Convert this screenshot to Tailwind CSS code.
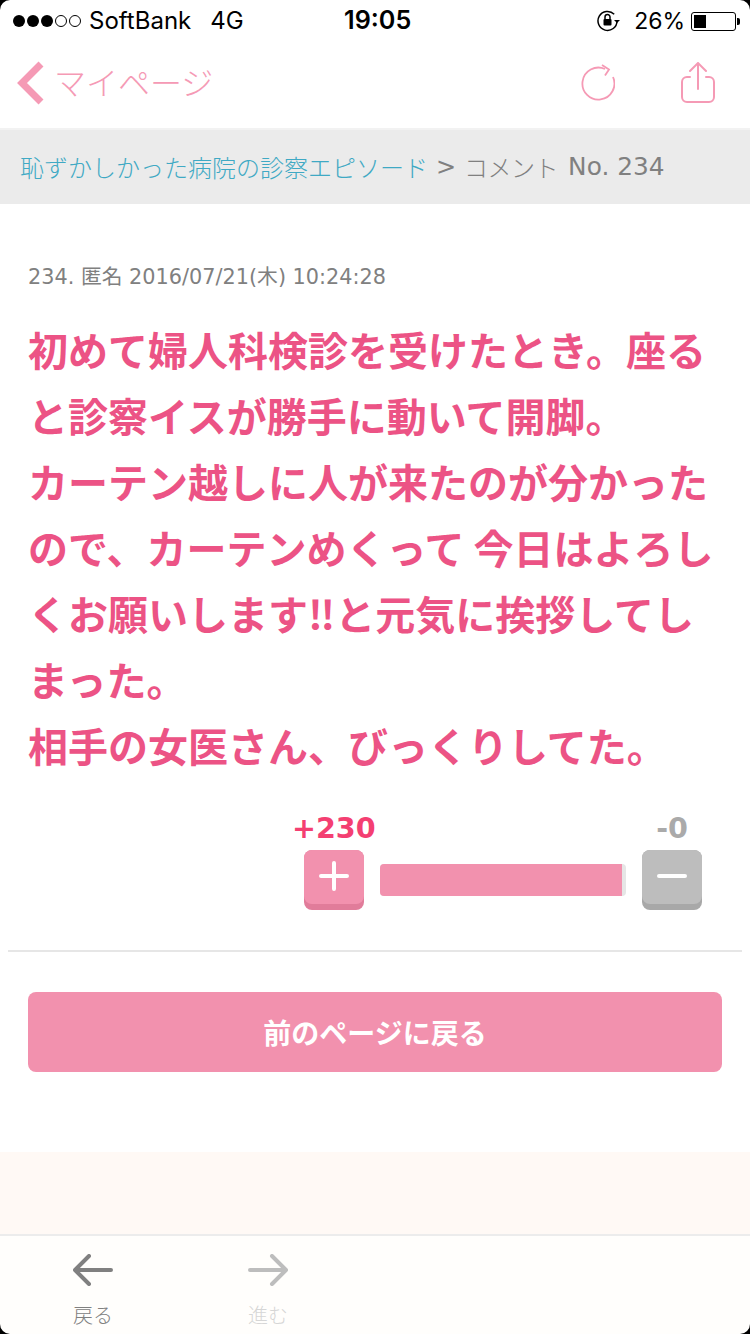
<!DOCTYPE html>
<html lang="ja">
<head>
    <meta charset="UTF-8">
    <meta name="viewport" content="width=device-width, initial-scale=1.0">
    <title>コメント No. 234</title>
    <script src="https://cdn.jsdelivr.net/npm/@tailwindcss/browser@4"></script>
</head>
<body class="bg-white">
    <div class="relative w-[750px] h-[1334px] overflow-hidden flex flex-col bg-white font-['DejaVu_Sans','Noto_Sans_CJK_JP',sans-serif]">
        <!-- status bar -->
        <div class="h-[40px] shrink-0 flex items-center pl-[13px] pr-[10px] pt-[2px] text-black text-[24px] font-['Inter','Noto_Sans_CJK_JP',sans-serif] relative">
            <div class="flex items-center gap-[2px]">
                <span class="w-[12px] h-[12px] rounded-full bg-black"></span>
                <span class="w-[12px] h-[12px] rounded-full bg-black"></span>
                <span class="w-[12px] h-[12px] rounded-full bg-black"></span>
                <span class="w-[12px] h-[12px] rounded-full border border-black"></span>
                <span class="w-[12px] h-[12px] rounded-full border border-black"></span>
            </div>
            <span class="ml-[8px]">SoftBank</span>
            <span class="ml-[19px]">4G</span>
            <span class="absolute left-[344px] font-semibold text-[25.200px]">19:05</span>
            <div class="ml-auto flex items-center">
                <svg width="24" height="22" viewBox="0 0 24 22" fill="none" class="mr-[13px]">
                    <path d="M20 11a9.500 9.500 0 1 1-2.800-6.800" stroke="#000" stroke-width="1.500"/>
                    <path d="M17 10h6l-3 3z" fill="#000"/>
                    <rect x="6.500" y="9" width="8" height="6.500" rx="1" fill="#000"/>
                    <path d="M8 9V7a2.500 2.500 0 0 1 5 0v2" stroke="#000" stroke-width="1.500"/>
                </svg>
                <span class="text-[23px]">26%</span>
                <div class="ml-[6px] flex items-center">
                    <div class="w-[45px] h-[19px] rounded-[3px] border border-black p-[2px]">
                        <div class="w-[12px] h-full bg-black"></div>
                    </div>
                    <div class="w-[3px] h-[7px] bg-black rounded-r-[2px] ml-[1px]"></div>
                </div>
            </div>
        </div>

        <!-- nav bar -->
        <div class="h-[88px] shrink-0 flex items-center relative">
            <svg width="30" height="44" viewBox="0 0 30 44" fill="none" class="ml-[16px] mb-[2px]">
                <path d="M25 3 6 22l19 19" stroke="#f59ab5" stroke-width="7"/>
            </svg>
            <span class="ml-[8px] mb-[6px] text-[32px] text-[#f59ab5] font-['Noto_Sans_CJK_JP',sans-serif] font-light leading-none">マイページ</span>
            <div class="ml-auto flex items-center gap-[66px] mr-[35px] mb-[3px]">
                <svg width="34" height="38" viewBox="0 0 34 38" fill="none" stroke="#f59ab5" stroke-width="1.800">
                    <path d="M24 5A16 16 0 1 0 32 13"/>
                    <path d="M21 1l7 4.500-4 6"/>
                </svg>
                <svg width="34" height="42" viewBox="0 0 34 42" fill="none" stroke="#f59ab5" stroke-width="2" stroke-linecap="round">
                    <path d="M17 27V2M9 9l8-8 8 8"/>
                    <path d="M9 15H6a5 5 0 0 0-5 5v15a5 5 0 0 0 5 5h22a5 5 0 0 0 5-5V20a5 5 0 0 0-5-5h-3"/>
                </svg>
            </div>
        </div>

        <!-- breadcrumb -->
        <div class="h-[76px] shrink-0 flex items-center px-[20px] bg-[#ebebeb] border-t-2 border-[#f2f2f2] text-[24px] text-[#808080]">
            <span class="text-[#3fa9c4] font-['Noto_Sans_CJK_JP',sans-serif] font-light">恥ずかしかった病院の診察エピソード</span>
            <span class="ml-[8px]">&gt;</span>
            <span class="ml-[8px] font-['Noto_Sans_CJK_JP',sans-serif] font-light tracking-[-0.5px]">コメント</span>
            <span class="ml-[10px] text-[24.800px]">No. 234</span>
        </div>

        <!-- comment -->
        <div class="pt-[60px] px-[28px] shrink-0">
            <p class="text-[20.800px] leading-[26px] text-[#808080]">234. 匿名 2016/07/21(木) 10:24:28</p>
            <p class="mt-[26px] w-[694px] text-[40px] leading-[66px] font-bold text-[#ec5385] font-['Noto_Sans_CJK_JP',sans-serif]">初めて婦人科検診を受けたとき。座ると診察イスが勝手に動いて開脚。<br>カーテン越しに人が来たのが分かったので、カーテンめくって 今日はよろしくお願いします‼と元気に挨拶してしまった。<br>相手の女医さん、びっくりしてた。</p>
        </div>

        <!-- votes -->
        <div class="shrink-0 ml-[294px] mt-[34px] w-[408px]">
            <div class="flex justify-between items-end h-[32px] text-[28.600px] leading-[32px] font-bold">
                <span class="text-[#f43f72] -ml-[2px]">+230</span>
                <span class="text-[#aaaaaa] mr-[14px]">-0</span>
            </div>
            <div class="flex items-center pl-[10px] mt-[6px]">
                <div class="w-[60px] h-[60px] rounded-[8px] bg-[#e17c9a]">
                    <div class="h-[54px] rounded-[8px] bg-[#f291ae] flex items-center justify-center pb-[2px]">
                        <svg width="30" height="30" viewBox="0 0 30 30" stroke="#fff" stroke-width="4" stroke-linecap="round"><path d="M15 2v26M2 15h26"/></svg>
                    </div>
                </div>
                <div class="ml-[16px] w-[246px] h-[32px] rounded-[4px] bg-[#e6e6e6] overflow-hidden">
                    <div class="w-[242px] h-full bg-[#f291ae]"></div>
                </div>
                <div class="ml-[16px] w-[60px] h-[60px] rounded-[8px] bg-[#a8a8a8]">
                    <div class="h-[54px] rounded-[8px] bg-[#bdbdbd] flex items-center justify-center pb-[2px]">
                        <svg width="30" height="30" viewBox="0 0 30 30" stroke="#fff" stroke-width="4" stroke-linecap="round"><path d="M2 15h26"/></svg>
                    </div>
                </div>
            </div>
        </div>

        <div class="shrink-0 mx-[8px] mt-[40px] h-[2px] bg-[#e6e6e6]"></div>

        <div class="shrink-0 mx-[28px] mt-[40px] h-[80px] rounded-[8px] bg-[#f291ae] flex items-center justify-center text-white text-[28px] font-bold font-['Noto_Sans_CJK_JP',sans-serif]">前のページに戻る</div>

        <div class="mt-[80px] h-[82px] shrink-0 bg-[#fff9f5]"></div>

        <!-- toolbar -->
        <div class="flex-1 border-t-2 border-[#ececec] bg-[#fffefc] flex relative">
            <div class="w-[186px] flex flex-col items-center pt-[18px]">
                <svg width="40" height="32" viewBox="0 0 40 32" fill="none" stroke="#808080" stroke-width="4" stroke-linecap="round" stroke-linejoin="round"><path d="M38 16H3M16 2 2 16l14 14"/></svg>
                <span class="mt-[16px] text-[20px] leading-[26px] text-[#808080] font-light font-['Noto_Sans_CJK_JP',sans-serif]">戻る</span>
            </div>
            <div class="w-[164px] flex flex-col items-center pt-[18px]">
                <svg width="40" height="32" viewBox="0 0 40 32" fill="none" stroke="#bdbdbd" stroke-width="4" stroke-linecap="round" stroke-linejoin="round"><path d="M2 16h35M24 2l14 14-14 14"/></svg>
                <span class="mt-[16px] text-[20px] leading-[26px] text-[#d6d6d6] font-light font-['Noto_Sans_CJK_JP',sans-serif]">進む</span>
            </div>
        </div>

        <!-- screen corners -->
        <svg class="absolute top-0 left-0" width="10" height="10" viewBox="0 0 10 10"><path d="M0 0H10A10 10 0 0 0 0 10Z" fill="#000"/></svg>
        <svg class="absolute top-0 right-0" width="10" height="10" viewBox="0 0 10 10"><path d="M10 0H0A10 10 0 0 1 10 10Z" fill="#000"/></svg>
        <svg class="absolute bottom-0 left-0" width="10" height="10" viewBox="0 0 10 10"><path d="M0 10V0A10 10 0 0 0 10 10Z" fill="#000"/></svg>
        <svg class="absolute bottom-0 right-0" width="10" height="10" viewBox="0 0 10 10"><path d="M10 10V0A10 10 0 0 1 0 10Z" fill="#000"/></svg>
    </div>
</body>
</html>
